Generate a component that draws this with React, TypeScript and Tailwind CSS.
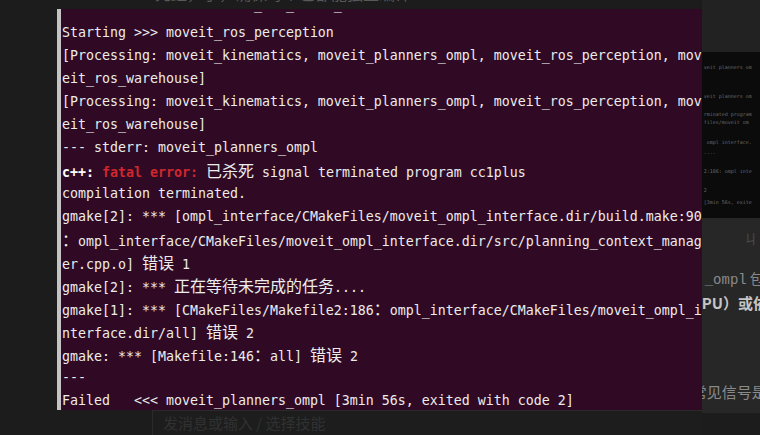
import type { ReactNode } from "react";

const mono = "font-['DejaVu_Sans_Mono',monospace]";
const cjk = "font-['Noto_Sans_CJK_SC',sans-serif] text-[16px] leading-[23px]";

function Cn({ children }: { children: ReactNode }) {
  return <span className={cjk}>{children}</span>;
}

function Line({ children }: { children: ReactNode }) {
  return <div className="h-[23px] leading-[23px] whitespace-pre overflow-hidden">{children}</div>;
}

const miniLines = [
  { t: "veit_planners_om", h: 18 },
  { t: "veit_planners_om", h: 29 },
  { t: "rminated program", h: 18 },
  { t: "files/moveit_om", h: 8 },
  { t: "_ompl_interface.", h: 20 },
  { t: "....", h: 10 },
  { t: "2:186: ompl_inte", h: 19 },
  { t: "2", h: 19 },
  { t: "[3min 56s, exite", h: 12 },
];

export default function App() {
  return (
    <div className="w-[760px] h-[435px] overflow-hidden bg-[#1c1c1c] flex">
      <div className="w-[708px] flex flex-col">
        {/* page text behind, cut off at the top */}
        <div className="h-[14px] overflow-hidden">
          <div className="pl-[155px] -mt-[19px] text-[16px] leading-[24px] text-[#595959] font-['Noto_Sans_CJK_SC',sans-serif] whitespace-nowrap">
            先红，了，确保每个包都能独立编译
          </div>
        </div>

        <div className="h-[401px] flex">
          <div className="w-[57px]" />
          <div className={`flex-1 overflow-hidden bg-[#300a24] border-l-4 border-[#c4c4c4] pl-[1px] text-[#ececec] text-[13.29px] ${mono}`}>
            <div className="h-[12px] overflow-hidden">
              <div className="-mt-[16px] h-[23px] leading-[23px] whitespace-pre">{"                        _   _     _"}</div>
            </div>
            <Line>Starting &gt;&gt;&gt; moveit_ros_perception</Line>
            <Line>[Processing: moveit_kinematics, moveit_planners_ompl, moveit_ros_perception, mov</Line>
            <Line>eit_ros_warehouse]</Line>
            <Line>[Processing: moveit_kinematics, moveit_planners_ompl, moveit_ros_perception, mov</Line>
            <Line>eit_ros_warehouse]</Line>
            <Line>--- stderr: moveit_planners_ompl</Line>
            <Line>
              <span className="font-bold text-white">c++:</span> <span className="font-bold text-[#d0262e]">fatal error:</span>{" "}
              <Cn>已杀死</Cn> signal terminated program cc1plus
            </Line>
            <Line>compilation terminated.</Line>
            <Line>gmake[2]: *** [ompl_interface/CMakeFiles/moveit_ompl_interface.dir/build.make:90</Line>
            <Line>
              <Cn>：</Cn>ompl_interface/CMakeFiles/moveit_ompl_interface.dir/src/planning_context_manag
            </Line>
            <Line>
              er.cpp.o] <Cn>错误</Cn> 1
            </Line>
            <Line>
              gmake[2]: *** <Cn>正在等待未完成的任务</Cn>....
            </Line>
            <Line>
              gmake[1]: *** [CMakeFiles/Makefile2:186<Cn>：</Cn>ompl_interface/CMakeFiles/moveit_ompl_i
            </Line>
            <Line>
              nterface.dir/all] <Cn>错误</Cn> 2
            </Line>
            <Line>
              gmake: *** [Makefile:146<Cn>：</Cn>all] <Cn>错误</Cn> 2
            </Line>
            <Line>---</Line>
            <Line>Failed   &lt;&lt;&lt; moveit_planners_ompl [3min 56s, exited with code 2]</Line>
          </div>
        </div>

        {/* chat input behind */}
        <div className="flex-1 flex">
          <div className="w-[152px]" />
          <div className="flex-1 border-l border-t border-[#2a2a2a] bg-[#1d1d1d] pl-[10px]">
            <span className="text-[15px] leading-[18px] text-[#313131] font-['Noto_Sans_CJK_SC',sans-serif]">发消息或输入 / 选择技能</span>
          </div>
        </div>
      </div>

      {/* right strip: page content behind */}
      <div className="flex-1 flex flex-col">
        <div className="h-[52px] bg-[#222222]" />
        <div className={`h-[166px] bg-[#0b0b0b] text-[5px] leading-[6px] text-[#6a6a6a] pl-[2px] ${mono}`}>
          {miniLines.map((l, i) => (
            <div key={i} className="flex items-end whitespace-pre overflow-hidden" style={{ height: l.h }}>
              {l.t}
            </div>
          ))}
        </div>
        <div className="h-[195px] bg-[#272727] flex flex-col font-['Noto_Sans_CJK_SC',sans-serif] whitespace-nowrap overflow-hidden">
          <div className="h-[49px] pl-[42px] pt-[10px] text-[14px] text-[#4a4a4a]">ㄐ</div>
          <div className="h-[23px] pl-[3px] text-[14px] leading-[23px] text-[#8a8a8a]">
            <span className="font-['Liberation_Mono',monospace]">_ompl</span> 包
          </div>
          <div className="h-[26px] text-[15px] leading-[26px] font-bold text-[#c6c6c6]">PU）或依</div>
          <div className="h-[64px]" />
          <div className="h-[24px] -ml-[10px] text-[15px] leading-[24px] text-[#8a8a8a]">常见信号是</div>
        </div>
        <div className="flex-1 bg-[#1c1c1c]" />
      </div>
    </div>
  );
}
